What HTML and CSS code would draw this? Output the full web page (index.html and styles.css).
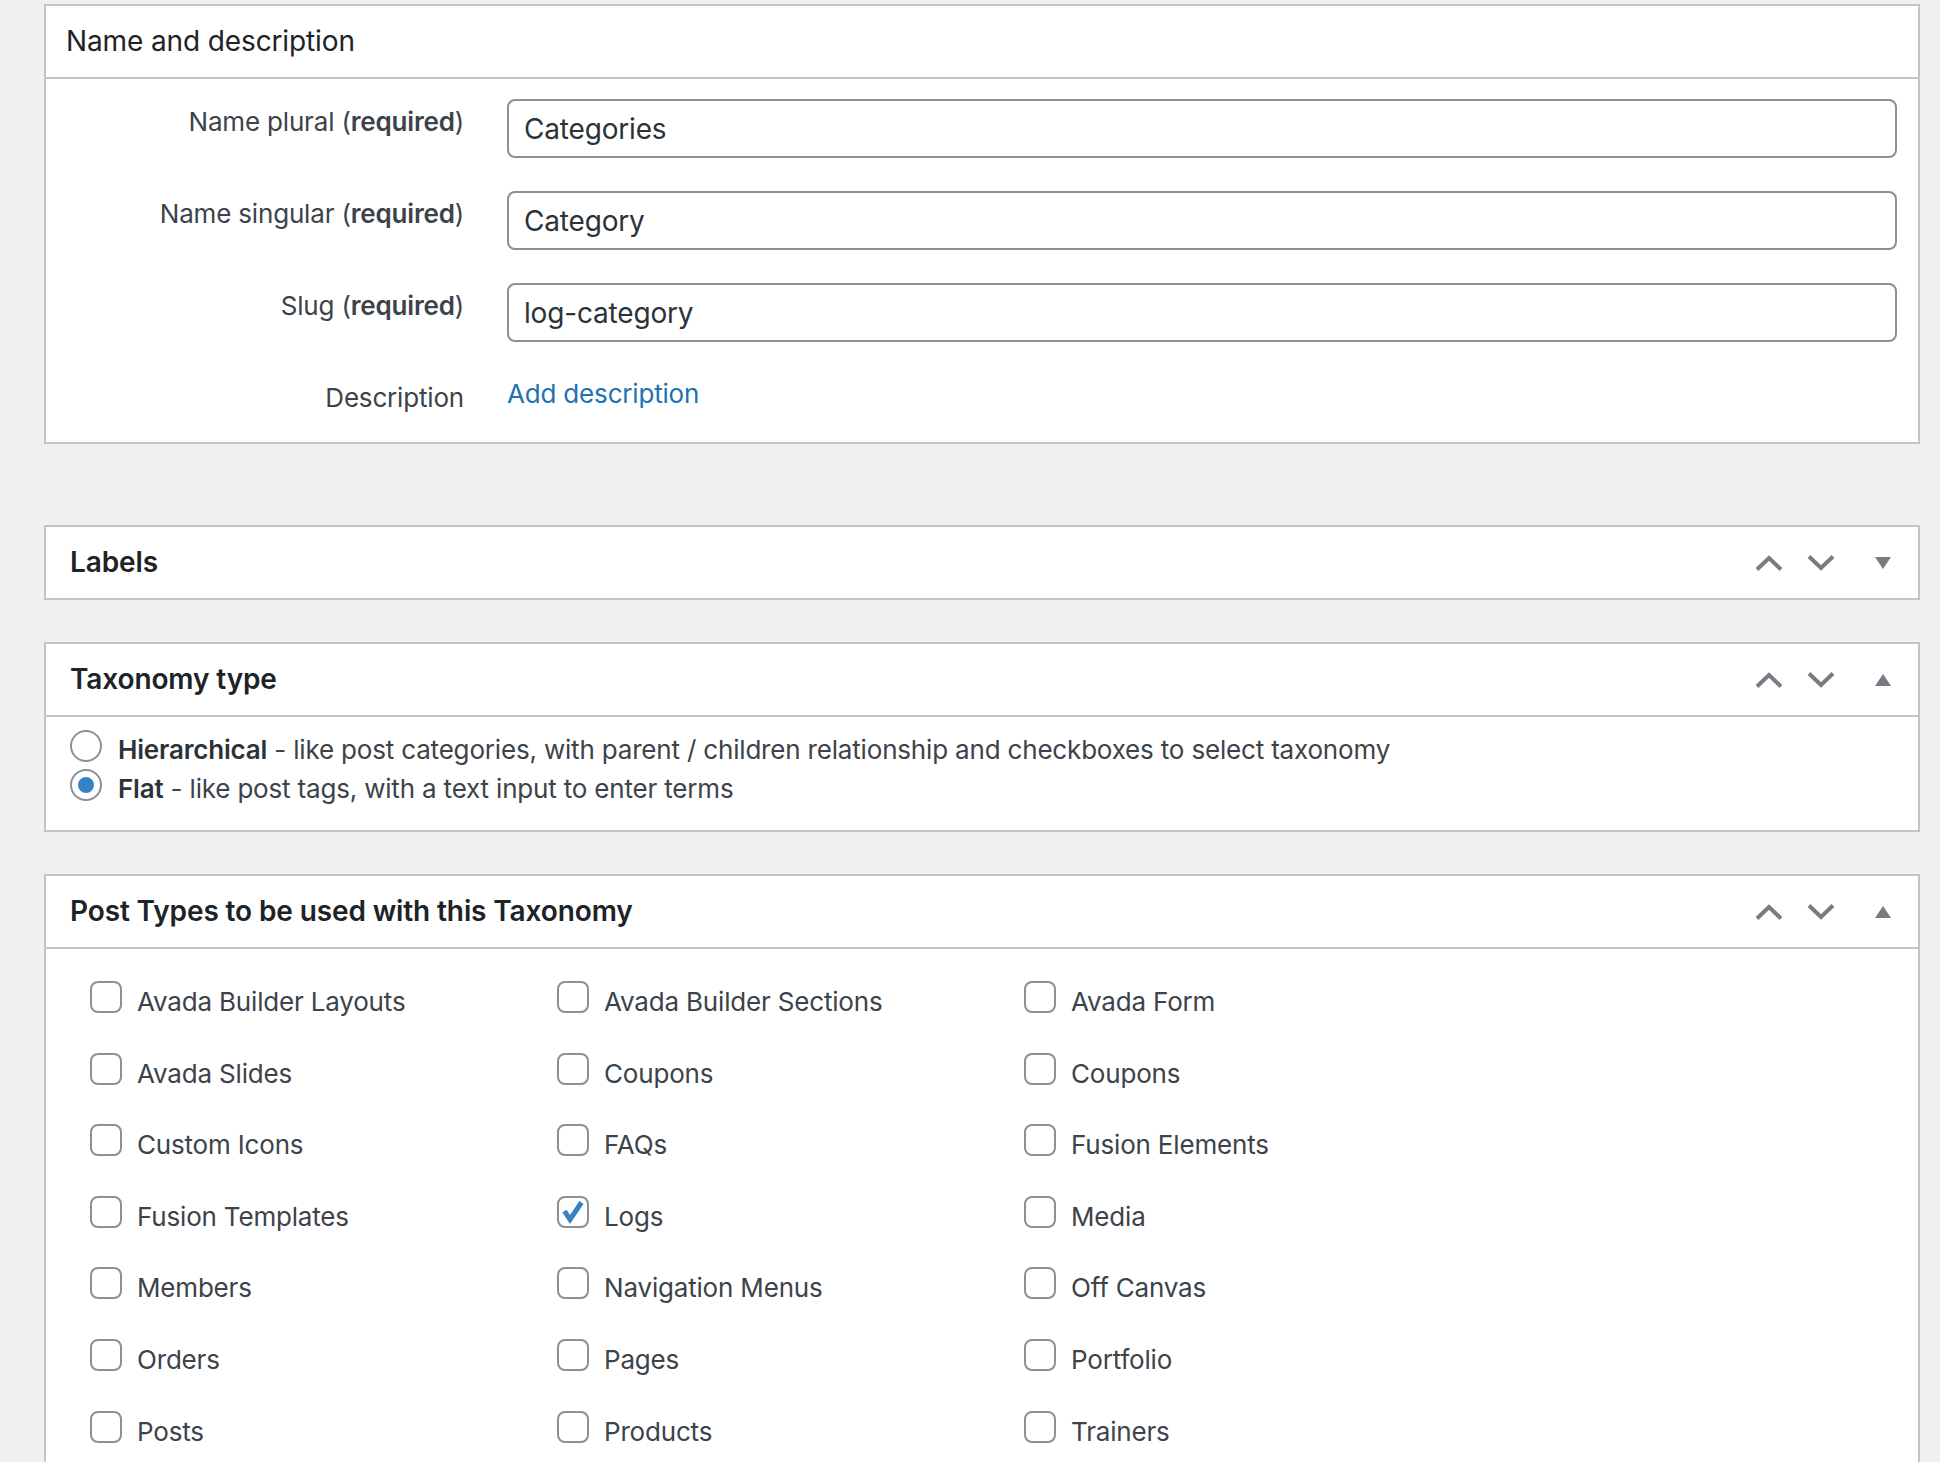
FILE: index.html
```html
<!DOCTYPE html>
<html lang="en">
<head>
<meta charset="utf-8">
<title>Edit Taxonomy</title>
<link rel="stylesheet" href="styles.css">
</head>
<body>
<div class="page">

  <section class="panel">
    <div class="panel-head">
      <h2 class="panel-title panel-title-plain">Name and description</h2>
    </div>
    <div class="form-body">
      <div class="form-row">
        <label class="form-label">Name plural (<strong>required</strong>)</label>
        <input class="text-input" type="text" value="Categories">
      </div>
      <div class="form-row">
        <label class="form-label">Name singular (<strong>required</strong>)</label>
        <input class="text-input" type="text" value="Category">
      </div>
      <div class="form-row">
        <label class="form-label">Slug (<strong>required</strong>)</label>
        <input class="text-input" type="text" value="log-category">
      </div>
      <div class="form-row form-row-last">
        <span class="form-label">Description</span>
        <a class="add-link" href="#">Add description</a>
      </div>
    </div>
  </section>

  <section class="panel panel-labels">
    <div class="panel-head">
      <h2 class="panel-title">Labels</h2>
      <div class="handle-actions">
        <svg class="chev" width="28" height="16" viewBox="0 0 28 16"><path d="M2 14.5 L14 3 L26 14.5" /></svg>
        <svg class="chev" width="28" height="16" viewBox="0 0 28 16"><path d="M2 1.5 L14 13 L26 1.5" /></svg>
        <svg class="tri" width="16" height="12" viewBox="0 0 16 12"><polygon points="0,0 16,0 8,12" /></svg>
      </div>
    </div>
  </section>

  <section class="panel panel-gap">
    <div class="panel-head panel-head-sep">
      <h2 class="panel-title">Taxonomy type</h2>
      <div class="handle-actions">
        <svg class="chev" width="28" height="16" viewBox="0 0 28 16"><path d="M2 14.5 L14 3 L26 14.5" /></svg>
        <svg class="chev" width="28" height="16" viewBox="0 0 28 16"><path d="M2 1.5 L14 13 L26 1.5" /></svg>
        <svg class="tri" width="16" height="12" viewBox="0 0 16 12"><polygon points="0,12 16,12 8,0" /></svg>
      </div>
    </div>
    <div class="radio-body">
      <div class="choice">
        <span class="radio"></span>
        <span class="choice-text"><strong>Hierarchical</strong> - like post categories, with parent / children relationship and checkboxes to select taxonomy</span>
      </div>
      <div class="choice">
        <span class="radio radio-on"></span>
        <span class="choice-text"><strong>Flat</strong> - like post tags, with a text input to enter terms</span>
      </div>
    </div>
  </section>

  <section class="panel panel-gap panel-open-end">
    <div class="panel-head panel-head-sep">
      <h2 class="panel-title">Post Types to be used with this Taxonomy</h2>
      <div class="handle-actions">
        <svg class="chev" width="28" height="16" viewBox="0 0 28 16"><path d="M2 14.5 L14 3 L26 14.5" /></svg>
        <svg class="chev" width="28" height="16" viewBox="0 0 28 16"><path d="M2 1.5 L14 13 L26 1.5" /></svg>
        <svg class="tri" width="16" height="12" viewBox="0 0 16 12"><polygon points="0,12 16,12 8,0" /></svg>
      </div>
    </div>
    <ul class="type-grid">
      <li class="type-item"><span class="checkbox"></span><span class="type-label">Avada Builder Layouts</span></li>
      <li class="type-item"><span class="checkbox"></span><span class="type-label">Avada Builder Sections</span></li>
      <li class="type-item"><span class="checkbox"></span><span class="type-label">Avada Form</span></li>
      <li class="type-item"><span class="checkbox"></span><span class="type-label">Avada Slides</span></li>
      <li class="type-item"><span class="checkbox"></span><span class="type-label">Coupons</span></li>
      <li class="type-item"><span class="checkbox"></span><span class="type-label">Coupons</span></li>
      <li class="type-item"><span class="checkbox"></span><span class="type-label">Custom Icons</span></li>
      <li class="type-item"><span class="checkbox"></span><span class="type-label">FAQs</span></li>
      <li class="type-item"><span class="checkbox"></span><span class="type-label">Fusion Elements</span></li>
      <li class="type-item"><span class="checkbox"></span><span class="type-label">Fusion Templates</span></li>
      <li class="type-item"><span class="checkbox checkbox-on"><svg width="28" height="28" viewBox="0 0 28 28"><path d="M5.5 13 L11 21.5 L22.5 4.5" /></svg></span><span class="type-label">Logs</span></li>
      <li class="type-item"><span class="checkbox"></span><span class="type-label">Media</span></li>
      <li class="type-item"><span class="checkbox"></span><span class="type-label">Members</span></li>
      <li class="type-item"><span class="checkbox"></span><span class="type-label">Navigation Menus</span></li>
      <li class="type-item"><span class="checkbox"></span><span class="type-label">Off Canvas</span></li>
      <li class="type-item"><span class="checkbox"></span><span class="type-label">Orders</span></li>
      <li class="type-item"><span class="checkbox"></span><span class="type-label">Pages</span></li>
      <li class="type-item"><span class="checkbox"></span><span class="type-label">Portfolio</span></li>
      <li class="type-item"><span class="checkbox"></span><span class="type-label">Posts</span></li>
      <li class="type-item"><span class="checkbox"></span><span class="type-label">Products</span></li>
      <li class="type-item"><span class="checkbox"></span><span class="type-label">Trainers</span></li>
    </ul>
  </section>

</div>
</body>
</html>
```

FILE: styles.css
```css
* {
  box-sizing: border-box;
}

html, body {
  margin: 0;
  padding: 0;
  background: #f0f0f1;
}

body {
  font-family: Inter, "Noto Sans", "Liberation Sans", sans-serif;
  font-size: 26px;
  letter-spacing: -0.18px;
  color: #3c434a;
  overflow: hidden;
  height: 1462px;
}

.page {
  padding: 4px 20px 0 44px;
}

.panel {
  background: #fff;
  border: 2px solid #c3c4c7;
}

.panel-labels {
  margin-top: 81px;
}

.panel-gap {
  margin-top: 42px;
}

.panel-open-end {
  min-height: 700px;
}

.panel-head {
  display: flex;
  align-items: center;
  height: 71px;
}

.panel > .panel-head:first-child:not(:last-child) {
  height: 73px;
  border-bottom: 2px solid #c3c4c7;
}

.panel-title {
  margin: 0;
  padding-left: 24px;
  font-size: 28px;
  line-height: 71px;
  font-weight: 600;
  letter-spacing: -0.12px;
  color: #1d2327;
  flex: 1;
}

.panel-title-plain {
  font-weight: 400;
  padding-left: 20px;
}

.handle-actions {
  display: flex;
  align-items: center;
  padding-right: 27px;
}

.chev {
  display: block;
  fill: none;
  stroke: #787c82;
  stroke-width: 4;
  margin-left: 24px;
}

.tri {
  display: block;
  fill: #787c82;
  margin-left: 40px;
}

/* Name and description form */
.form-body {
  padding: 20px 21px 26px 0;
}

.form-row {
  display: flex;
  align-items: flex-start;
  margin-bottom: 33px;
}

.form-row-last {
  margin-bottom: 0;
}

.form-label {
  width: 418px;
  flex: none;
  text-align: right;
  padding-top: 5px;
  line-height: 36px;
  color: #3c434a;
  margin-right: 43px;
}

.form-label strong {
  font-weight: 600;
}

.text-input {
  flex: 1;
  min-width: 0;
  height: 59px;
  border: 2px solid #8c8f94;
  border-radius: 8px;
  padding: 0 15px;
  font-family: inherit;
  font-size: 28px;
  letter-spacing: -0.18px;
  color: #2c3338;
  background: #fff;
  outline: none;
  margin: 0;
}

.add-link {
  padding-top: 1px;
  line-height: 36px;
  color: #2271b1;
  text-decoration: none;
}

/* Taxonomy type radios */
.radio-body {
  padding: 15px 24px 23px;
  display: flex;
  flex-direction: column;
  gap: 3px;
}

.choice {
  display: flex;
  align-items: flex-start;
  height: 36px;
}

.choice-text {
  line-height: 36px;
  color: #3c434a;
}

.choice-text strong {
  font-weight: 600;
  color: #2c3338;
}

.radio {
  flex: none;
  width: 32px;
  height: 32px;
  margin-top: -2px;
  margin-right: 16px;
  border: 2px solid #8c8f94;
  border-radius: 50%;
  background: #fff;
  display: flex;
  align-items: center;
  justify-content: center;
}

.radio-on::after {
  content: "";
  width: 16px;
  height: 16px;
  border-radius: 50%;
  background: #3582c4;
}

/* Post types grid */
.type-grid {
  list-style: none;
  margin: 0;
  padding: 35px 0 0 44px;
  display: grid;
  grid-template-columns: repeat(3, 467px);
  grid-auto-rows: 36px;
  row-gap: 35.6px;
}

.type-item {
  display: flex;
  align-items: flex-start;
}

.checkbox {
  flex: none;
  width: 32px;
  height: 32px;
  margin-top: -3px;
  margin-right: 15px;
  border: 2px solid #8c8f94;
  border-radius: 8px;
  background: #fff;
  display: flex;
  align-items: center;
  justify-content: center;
}

.checkbox svg {
  display: block;
  fill: none;
  stroke: #3582c4;
  stroke-width: 5;
  stroke-linejoin: miter;
}

.type-label {
  line-height: 36px;
  color: #3c434a;
}
```
